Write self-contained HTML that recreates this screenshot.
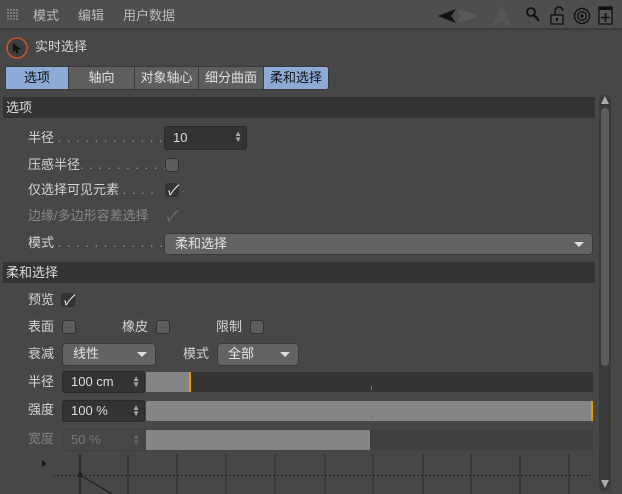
<!DOCTYPE html>
<html><head><meta charset="utf-8"><style>
*{margin:0;padding:0;box-sizing:border-box}
body{width:622px;height:494px;background:#474747;font-family:"Liberation Sans","Noto Sans CJK SC",sans-serif;font-size:13px;color:#d4d4d4;position:relative;overflow:hidden}
.a{position:absolute;white-space:nowrap}
.t{position:absolute;line-height:16px}
.tab{position:absolute;top:66px;height:24px;background:#5e5e5e;border:1px solid #3a3a3a;text-align:center;line-height:22px;color:#e0e0e0}
.tab.on{background:#8eaad6;color:#111}
.sec{position:absolute;left:3px;width:592px;height:21px;background:#333;line-height:21px;padding-left:3px;color:#ddd}
.fld{position:absolute;background:#333;border:1px solid #2a2a2a;border-radius:3px;color:#ddd;line-height:19px;padding-left:8px}
.cb{position:absolute;width:14px;height:14px;background:#5c5c5c;border:1px solid #333;border-radius:3px}
.cb.ck{background:#333;color:#eee;font-size:14px;line-height:12px;text-align:center;font-style:italic}
.dd{position:absolute;background:#636363;border:1px solid #3a3a3a;border-radius:4px;line-height:20px;padding-left:10px;color:#e5e5e5}
.arr{position:absolute;right:8px;top:8px;width:0;height:0;border-left:5px solid transparent;border-right:5px solid transparent;border-top:5px solid #ddd}
.sp{position:absolute;right:4px;top:4px;font-size:8px;line-height:6px;color:#aaa}
.dots{color:#9a9a9a;letter-spacing:1px}
</style></head><body>
<div class="a" style="left:0;top:0;width:622px;height:30px;background:#4e4e4e;border-bottom:2px solid #3c3c3c"></div>
<svg class="a" style="left:6px;top:8px" width="16" height="14"><g fill="#8a8a8a"><circle cx="2" cy="2" r="1"/><circle cx="5" cy="2" r="1"/><circle cx="8" cy="2" r="1"/><circle cx="11" cy="2" r="1"/><circle cx="2" cy="5" r="1"/><circle cx="5" cy="5" r="1"/><circle cx="8" cy="5" r="1"/><circle cx="11" cy="5" r="1"/><circle cx="2" cy="8" r="1"/><circle cx="5" cy="8" r="1"/><circle cx="8" cy="8" r="1"/><circle cx="11" cy="8" r="1"/><circle cx="2" cy="11" r="1"/><circle cx="5" cy="11" r="1"/><circle cx="8" cy="11" r="1"/><circle cx="11" cy="11" r="1"/></g></svg>
<div class="t" style="left:33px;top:8px;color:#bbb">模式</div>
<div class="t" style="left:78px;top:8px;color:#bbb">编辑</div>
<div class="t" style="left:123px;top:8px;color:#bbb">用户数据</div>
<svg class="a" style="left:436px;top:4px" width="186" height="24">
<path d="M2 12 L20 5 L15 12 L20 19Z" fill="#111"/>
<path d="M40 12 L22 6 L26 12 L22 18Z" fill="#585858" stroke="#666" stroke-width="0.5"/>
<path d="M66 3 L58 21 L66 17 L74 21Z" fill="#555" stroke="#606060" stroke-width="0.5"/>
<circle cx="95" cy="8" r="4" fill="none" stroke="#111" stroke-width="1.8"/><path d="M98 11 L103 17" stroke="#111" stroke-width="2.2"/>
<path d="M119 11 V7 a4 4 0 0 1 8 0" fill="none" stroke="#111" stroke-width="1.5"/><rect x="115" y="11" width="12" height="9" fill="#555" stroke="#111" stroke-width="1.3"/><rect x="120" y="14" width="2" height="3" fill="#111"/>
<circle cx="146" cy="12" r="7.5" fill="none" stroke="#111" stroke-width="1.4"/><circle cx="146" cy="12" r="4.3" fill="none" stroke="#111" stroke-width="1.3"/><circle cx="146" cy="12" r="1.6" fill="#111"/>
<rect x="163" y="3" width="13" height="17" fill="#555" stroke="#111" stroke-width="1.3"/><rect x="163" y="3" width="13" height="3" fill="#111"/><path d="M169.5 9 V18 M165 13.5 H174" stroke="#111" stroke-width="1.6"/>
</svg>
<svg class="a" style="left:5px;top:36px" width="24" height="24"><circle cx="12" cy="12" r="10" fill="#3d3d3d" stroke="#c4532a" stroke-width="1.6"/><path d="M8 7 L16 13 L12.5 13.5 L13 17 L11 17 L10.5 14 L8 16Z" fill="#111"/></svg>
<div class="t" style="left:35px;top:39px">实时选择</div>
<div class="tab on" style="left:5px;width:64px">选项</div>
<div class="tab" style="left:68px;width:67px">轴向</div>
<div class="tab" style="left:134px;width:65px">对象轴心</div>
<div class="tab" style="left:198px;width:66px">细分曲面</div>
<div class="tab on" style="left:263px;width:66px;border-radius:0 3px 3px 0">柔和选择</div>
<div class="sec" style="top:97px">选项</div>
<div class="t" style="left:28px;top:130px">半径 <span class="dots">. . . . . . . . . . . . . .</span></div>
<div class="fld" style="left:164px;top:126px;width:83px;height:24px;line-height:22px">10<span class="sp">▲<br>▼</span></div>
<div class="t" style="left:28px;top:157px">压感半径<span class="dots">. . . . . . . . . .</span></div>
<div class="cb" style="left:165px;top:158px"></div>
<div class="t" style="left:28px;top:182px">仅选择可见元素 <span class="dots">. . . .</span></div>
<div class="cb ck" style="left:165px;top:183px">✓</div>
<div class="t" style="left:28px;top:208px;color:#888">边缘/多边形容差选择</div>
<div class="a" style="left:166px;top:206px;color:#777;font-size:14px;font-style:italic">✓</div>
<div class="t" style="left:28px;top:235px">模式 <span class="dots">. . . . . . . . . . . . . .</span></div>
<div class="dd" style="left:164px;top:233px;width:429px;height:22px">柔和选择<div class="arr"></div></div>
<div class="sec" style="top:262px">柔和选择</div>
<div class="t" style="left:28px;top:292px">预览</div>
<div class="cb ck" style="left:61px;top:293px">✓</div>
<div class="t" style="left:28px;top:319px">表面</div><div class="cb" style="left:62px;top:320px"></div>
<div class="t" style="left:122px;top:319px">橡皮</div><div class="cb" style="left:156px;top:320px"></div>
<div class="t" style="left:216px;top:319px">限制</div><div class="cb" style="left:250px;top:320px"></div>
<div class="t" style="left:28px;top:346px">衰减</div>
<div class="dd" style="left:62px;top:343px;width:94px;height:23px">线性<div class="arr"></div></div>
<div class="t" style="left:183px;top:346px">模式</div>
<div class="dd" style="left:217px;top:343px;width:82px;height:23px">全部<div class="arr"></div></div>
<div class="t" style="left:28px;top:374px">半径</div>
<div class="fld" style="left:62px;top:371px;width:83px;height:22px">100 cm<span class="sp">▲<br>▼</span></div>
<div class="a" style="left:146px;top:372px;width:447px;height:20px;background:#343434;border-radius:2px"></div>
<div class="a" style="left:146px;top:372px;width:44px;height:20px;background:#858585"></div>
<div class="a" style="left:189px;top:372px;width:2px;height:20px;background:#e49a00"></div>
<div class="a" style="left:371px;top:386px;width:1px;height:4px;background:#a07020"></div>
<div class="t" style="left:28px;top:402px">强度</div>
<div class="fld" style="left:62px;top:400px;width:83px;height:22px">100 %<span class="sp">▲<br>▼</span></div>
<div class="a" style="left:146px;top:401px;width:447px;height:20px;background:#858585;border-radius:2px"></div>
<div class="a" style="left:591px;top:401px;width:2px;height:20px;background:#e49a00"></div>
<div class="a" style="left:371px;top:415px;width:1px;height:4px;background:#a07020"></div>
<div class="t" style="left:28px;top:431px;color:#808080">宽度</div>
<div class="fld" style="left:62px;top:429px;width:83px;height:22px;background:#464646;border-color:#3e3e3e;color:#777">50 %<span class="sp" style="color:#666">▲<br>▼</span></div>
<div class="a" style="left:146px;top:430px;width:447px;height:20px;background:#404040;border-radius:2px"></div>
<div class="a" style="left:146px;top:430px;width:224px;height:20px;background:#858585"></div>
<svg class="a" style="left:0;top:452px" width="600" height="42">
<path d="M42 8 L46 12 L42 15Z" fill="#111"/>
<g stroke="#2e2e2e" stroke-width="1"><path d="M128 2V42M177 2V42M226 2V42M275 2V42M325 2V42M373 2V42M423 2V42M471 2V42M520 2V42M569 2V42"/></g>
<path d="M80 2V42" stroke="#222" stroke-width="1.3"/>
<path d="M53 23.5H590" stroke="#222" stroke-dasharray="2,2"/>
<path d="M80 23 L112 42" stroke="#222" stroke-width="1.2"/>
<circle cx="80" cy="23" r="2.5" fill="#222"/>
</svg>
<div class="a" style="left:599px;top:95px;width:12px;height:396px;background:#3a3a3a;border-radius:6px"></div>
<div class="a" style="left:601px;top:108px;width:8px;height:258px;background:#5c5c5c;border-radius:4px"></div>
<div class="a" style="left:601px;top:96px;width:0;height:0;border-left:4px solid transparent;border-right:4px solid transparent;border-bottom:8px solid #aaa"></div>
<div class="a" style="left:601px;top:480px;width:0;height:0;border-left:4px solid transparent;border-right:4px solid transparent;border-top:8px solid #aaa"></div>
</body></html>
